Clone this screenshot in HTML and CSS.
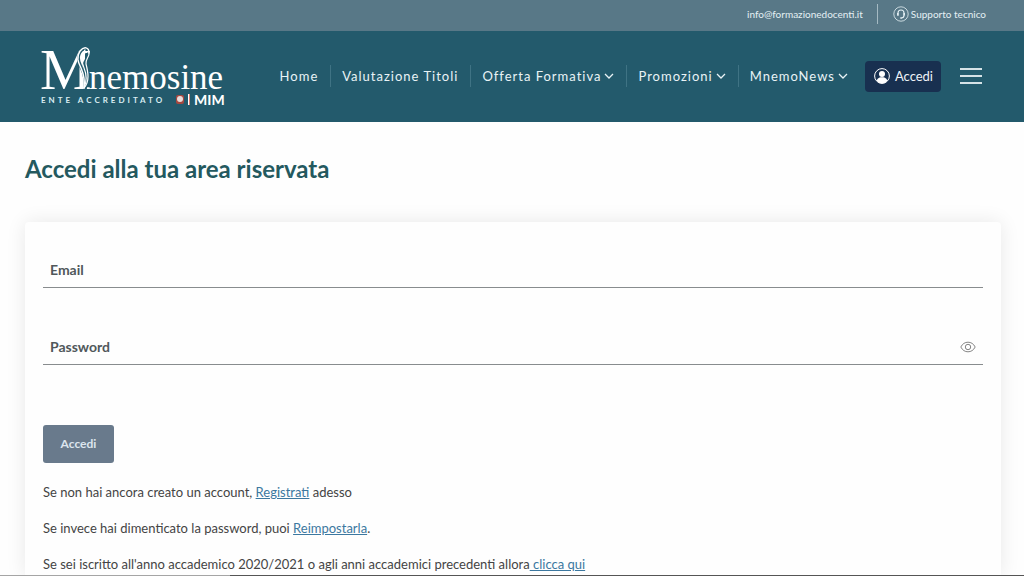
FILE: index.html
```html
<!DOCTYPE html>
<html lang="it">
<head>
  <meta charset="UTF-8">
  <meta name="viewport" content="width=device-width, initial-scale=1.0">
  <title>Accedi - Mnemosine</title>
  <link rel="stylesheet" href="styles.css">
</head>
<body>

<div class="topbar">
  <a href="mailto:info@formazionedocenti.it">info@formazionedocenti.it</a>
  <a class="support" href="#">
    <svg width="16" height="16" viewBox="0 0 16 16" fill="none" stroke="currentColor">
      <circle cx="8" cy="8" r="7.200" stroke-width=".8"/>
      <path d="M5 9.700V7a3 3 0 0 1 6 0v2.300c0 1.700-1 2.700-2.700 2.700" stroke-width="1.1"/>
      <path d="M4.800 7v2.500M11.200 7v2.500M7.300 12h1.500" stroke-width="1.5"/>
    </svg>
    Supporto tecnico
  </a>
</div>

<header class="header">
  <a class="logo" href="#">
    <svg width="186" height="78" viewBox="0 0 186 78" fill="#fff">
      <text class="logo-m" x="0" y="52">M</text>
      <text class="logo-name" x="49" y="52">nemosine</text>
      <g fill="none" stroke="#235a6c" stroke-width="3">
        <path d="M44 11C36 17 38 24 41 30s5 13 4 22"/>
        <path d="M49 15c1 5-5 8-5 14 0 7 6 13 1 23"/>
      </g>
      <g fill="none" stroke="#fff" stroke-linecap="round">
        <path d="M49 16c0-6-5-7-9-2-4 6-2 11 1 17 3 7 4 13 3 20" stroke-width="1.500"/>
        <path d="M45 13c-5 5-4 11-1 18 3 7 3 13 0 20" stroke-width="1.200"/>
        <path d="M49 15c1 5-4 7-3 12 2 8 4 17-2 24" stroke-width="1.200"/>
      </g>
      <text class="logo-tag" x="1" y="66">ENTE ACCREDITATO</text>
      <rect x="136" y="58" width="8" height="9" rx="2" fill="#a6473f"/>
      <circle cx="140" cy="62" r="3" fill="#e9dcda"/>
      <rect x="148" y="57" width="1" height="11" fill="#fff"/>
      <rect x="149" y="57" width="1" height="11" fill="#df8377"/>
      <text class="logo-mim" x="154" y="68">MIM</text>
    </svg>
  </a>

  <nav class="nav">
    <a href="#">Home</a>
    <a href="#">Valutazione Titoli</a>
    <a href="#">Offerta Formativa<svg class="chevron" viewBox="0 0 10 6"><path d="M1 1l4 4 4-4"/></svg></a>
    <a href="#">Promozioni<svg class="chevron" viewBox="0 0 10 6"><path d="M1 1l4 4 4-4"/></svg></a>
    <a href="#">MnemoNews<svg class="chevron" viewBox="0 0 10 6"><path d="M1 1l4 4 4-4"/></svg></a>
  </nav>

  <a class="login-link" href="#">
    <svg width="16" height="16" viewBox="0 0 16 16">
      <circle cx="8" cy="8" r="7.400" fill="none" stroke="#fff"/>
      <circle cx="8" cy="6" r="3" fill="#fff"/>
      <path d="M2.500 12.500C4 9.800 6 9.300 8 9.300s4 .5 5.500 3.200A7 7 0 0 1 8 15.400a7 7 0 0 1-5.500-2.900z" fill="#fff"/>
    </svg>
    Accedi
  </a>

  <button class="menu" type="button" aria-label="Menu">
    <span></span>
    <span></span>
    <span></span>
  </button>
</header>

<main class="main">
  <h1>Accedi alla tua area riservata</h1>

  <div class="card">
    <form>
      <div class="field">
        <label for="email">Email</label>
        <input type="email" id="email">
      </div>
      <div class="field">
        <label for="password">Password</label>
        <input type="password" id="password">
        <button class="show-password" type="button" aria-label="Mostra password">
          <svg width="16" height="12" viewBox="0 0 16 12" fill="none" stroke="currentColor">
            <path d="M.8 6C2.500 2.700 5 1.200 8 1.200S13.500 2.700 15.200 6C13.500 9.300 11 10.800 8 10.800S2.500 9.300.8 6z"/>
            <circle cx="8" cy="6" r="2.700"/>
          </svg>
        </button>
      </div>
      <button class="submit" type="submit">Accedi</button>
    </form>

    <p>Se non hai ancora creato un account, <a href="#">Registrati</a> adesso</p>
    <p>Se invece hai dimenticato la password, puoi <a href="#">Reimpostarla</a>.</p>
    <p>Se sei iscritto all'anno accademico 2020/2021 o agli anni accademici precedenti allora<a href="#"> clicca qui</a></p>
  </div>
</main>

<div class="bottom-line"></div>

</body>
</html>
```
FILE: styles.css
```css
* {
  box-sizing: border-box;
}

body {
  margin: 0;
  min-height: 100vh;
  display: flex;
  flex-direction: column;
  font-family: Lato, "Open Sans", sans-serif;
  font-size: 13px;
  line-height: 20px;
  color: #444;
  background: #fefefe;
}

.topbar {
  display: flex;
  justify-content: flex-end;
  align-items: center;
  height: 31px;
  padding: 0 38px 3px 0;
  background: #587887;
  font-size: 10px;
}

.topbar a {
  color: #e4f0f4;
  text-decoration: none;
}

.support {
  display: flex;
  align-items: center;
  gap: 2px;
  margin-left: 14px;
  padding-left: 15px;
  border-left: 1px solid #a5bac3;
}

.header {
  display: flex;
  align-items: center;
  height: 91px;
  padding: 0 42px 1px 40px;
  background: #235a6c;
}

.logo svg {
  display: block;
}

.logo-m {
  font: 58px "Liberation Serif", serif;
}

.logo-name {
  font: 35px "Liberation Serif", serif;
}

.logo-tag {
  font: bold 8px Lato, sans-serif;
  letter-spacing: 3px;
  fill: #d9edf2;
}

.logo-mim {
  font: bold 14px Lato, sans-serif;
}

.nav {
  display: flex;
  margin-left: auto;
}

.nav a {
  display: flex;
  align-items: center;
  height: 22px;
  padding: 0 12px 0 11px;
  border-left: 1px solid #3f7384;
  color: #e9f3f6;
  letter-spacing: 1px;
  text-decoration: none;
  white-space: nowrap;
}

.nav a:first-child {
  border-left: none;
}

.chevron {
  width: 10px;
  height: 6px;
  margin-left: 3px;
  fill: none;
  stroke: #e9f3f6;
  stroke-width: 1.3;
}

.login-link {
  display: flex;
  align-items: center;
  gap: 5px;
  height: 31px;
  margin: 0 19px 0 5px;
  padding: 0 8px 0 9px;
  border-radius: 4px;
  background: #183050;
  color: #eef3f8;
  text-decoration: none;
}

.menu {
  display: flex;
  flex-direction: column;
  gap: 5px;
  padding: 0;
  border: none;
  background: none;
  cursor: pointer;
}

.menu span {
  width: 22px;
  height: 2px;
  background: #d5e2e6;
}

.main {
  flex: 1;
  display: flex;
  flex-direction: column;
  padding: 0 23px 0 25px;
}

h1 {
  margin: 31px 0 37px;
  font-size: 24px;
  line-height: 32px;
  color: #24595f;
}

.card {
  flex: 1;
  padding: 32px 18px 0;
  border-radius: 4px 4px 0 0;
  background: #fefefe;
  box-shadow: 0 0 20px rgba(0, 0, 0, 0.09);
}

.field {
  display: flex;
  align-items: center;
  height: 34px;
  margin-bottom: 43px;
  padding: 0 7px 1px;
  border-bottom: 1px solid #888c8e;
}

.field label {
  font-size: 14px;
  font-weight: bold;
  color: #50585b;
}

.field input {
  flex: 1;
  min-width: 0;
  border: none;
  outline: none;
  background: none;
  font: inherit;
}

.show-password {
  display: flex;
  padding: 0;
  border: none;
  background: none;
  color: #858585;
  cursor: pointer;
}

.submit {
  display: block;
  width: 71px;
  height: 38px;
  margin: 60px 0 19px;
  padding: 0 0 1px;
  border: none;
  border-radius: 3px;
  background: #697a8c;
  color: #dce5ee;
  font: bold 12px Lato, "Open Sans", sans-serif;
  cursor: pointer;
}

.card p {
  margin: 0 0 16px;
}

.card p:last-child {
  margin-bottom: 0;
}

.card p a {
  color: #3c78a0;
}

.bottom-line {
  position: fixed;
  left: 0;
  right: 0;
  bottom: 0;
  height: 1px;
  background: linear-gradient(to right, #a5a5a5 230px, #555 230px);
}
```
